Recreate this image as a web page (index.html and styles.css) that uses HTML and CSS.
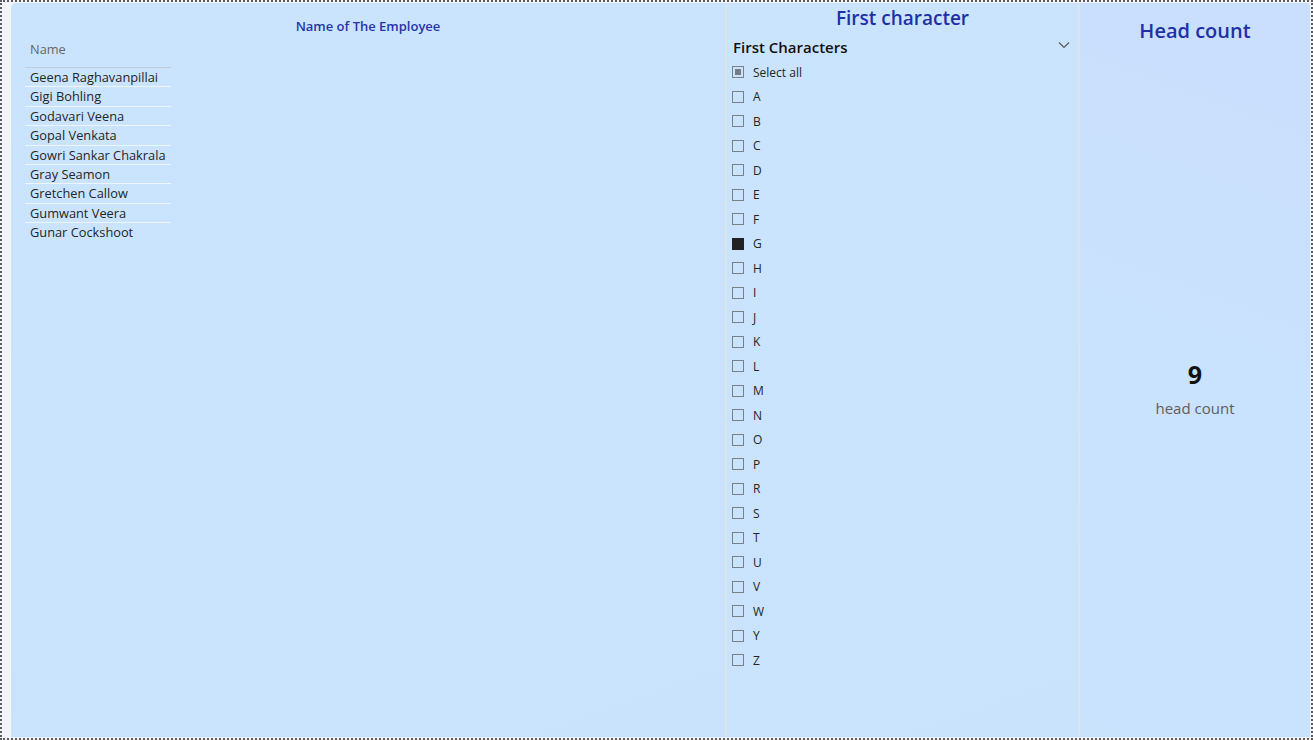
FILE: index.html
```html
<!DOCTYPE html>
<html>
<head>
<meta charset="utf-8">
<link rel="stylesheet" href="styles.css">
</head>
<body>
<div class="canvas">
  <section class="panel panel-names">
    <h2 class="names-title">Name of The Employee</h2>
    <div class="table">
      <div class="th">Name</div>
      <div class="td">Geena Raghavanpillai</div>
      <div class="td">Gigi Bohling</div>
      <div class="td">Godavari Veena</div>
      <div class="td">Gopal Venkata</div>
      <div class="td">Gowri Sankar Chakrala</div>
      <div class="td">Gray Seamon</div>
      <div class="td">Gretchen Callow</div>
      <div class="td">Gumwant Veera</div>
      <div class="td last">Gunar Cockshoot</div>
    </div>
  </section>
  <div class="divider"></div>
  <section class="panel panel-slicer">
    <h2 class="slicer-title">First character</h2>
    <div class="slicer-head">
      <span>First Characters</span>
      <svg class="chev" width="12" height="8" viewBox="0 0 12 8"><path d="M1 1.5 L6 6.5 L11 1.5" fill="none" stroke="#555" stroke-width="1.1"/></svg>
    </div>
    <ul class="items">
      <li><span class="box partial"></span>Select all</li>
      <li><span class="box"></span>A</li>
      <li><span class="box"></span>B</li>
      <li><span class="box"></span>C</li>
      <li><span class="box"></span>D</li>
      <li><span class="box"></span>E</li>
      <li><span class="box"></span>F</li>
      <li><span class="box on"></span>G</li>
      <li><span class="box"></span>H</li>
      <li><span class="box"></span>I</li>
      <li><span class="box"></span>J</li>
      <li><span class="box"></span>K</li>
      <li><span class="box"></span>L</li>
      <li><span class="box"></span>M</li>
      <li><span class="box"></span>N</li>
      <li><span class="box"></span>O</li>
      <li><span class="box"></span>P</li>
      <li><span class="box"></span>R</li>
      <li><span class="box"></span>S</li>
      <li><span class="box"></span>T</li>
      <li><span class="box"></span>U</li>
      <li><span class="box"></span>V</li>
      <li><span class="box"></span>W</li>
      <li><span class="box"></span>Y</li>
      <li><span class="box"></span>Z</li>
    </ul>
  </section>
  <div class="divider"></div>
  <section class="panel panel-card">
    <h2 class="card-title">Head count</h2>
    <div class="card-body">
      <div class="card-value">9</div>
      <div class="card-label">head count</div>
    </div>
  </section>
</div>
</body>
</html>
```
FILE: styles.css
```css
* { box-sizing: border-box; }
html, body { margin: 0; padding: 0; }
body {
  width: 1313px;
  height: 740px;
  font-family: "Segoe UI", "Open Sans", "Noto Sans", sans-serif;
  background: #ffffff;
  overflow: hidden;
}
.canvas {
  width: 1313px;
  height: 740px;
  border: 2px dotted #5c5c5c;
  background: #f3f4f9;
  display: flex;
  padding: 1px 1px 1px 9px;
}
.panel {
  height: 100%;
  background: linear-gradient(160deg, #cbe4fe 0%, #c9e3fd 100%);
}
.divider {
  width: 2px;
  height: 100%;
  background: #dbe3ec;
}
.panel-names {
  width: 714px;
  border-top-left-radius: 5px;
  padding: 14px 0 0 14px;
}
.names-title {
  margin: 0;
  font-size: 13px;
  line-height: 18px;
  font-weight: 600;
  color: #2535a8;
  text-align: center;
  padding-right: 14px;
}
.table {
  width: 146px;
  margin-top: 5px;
  font-size: 12.8px;
  color: #252423;
}
.th {
  color: #666666;
  line-height: 18px;
  padding: 0 0 9px 5px;
  border-bottom: 1.5px solid #c2cad3;
}
.td {
  line-height: 18.4px;
  padding-left: 5px;
  border-bottom: 1px solid #eef5fd;
}
.td:first-of-type { padding-top: 1.5px; }
.td.last { border-bottom: none; }
.panel-slicer {
  width: 351px;
  padding: 3px 0 0 6px;
  display: flex;
  flex-direction: column;
}
.slicer-title {
  margin: 0;
  font-size: 19px;
  line-height: 24px;
  font-weight: 600;
  color: #1e30a6;
  text-align: center;
  padding-right: 6px;
}
.slicer-head {
  margin-top: 7px;
  display: flex;
  justify-content: space-between;
  align-items: flex-start;
  padding-right: 8px;
  font-size: 15px;
  line-height: 20px;
  font-weight: 600;
  color: #111111;
}
.chev { margin-top: 4px; }
.items {
  list-style: none;
  margin: 2.75px 0 0 -1px;
  padding: 0;
}
.items li {
  height: 24.5px;
  display: flex;
  align-items: center;
  font-size: 12px;
  color: #252423;
}
.box {
  width: 12px;
  height: 12px;
  border: 1px solid #7b7f86;
  margin-right: 9px;
  display: flex;
  align-items: center;
  justify-content: center;
}
.box.partial::after {
  content: "";
  width: 6px;
  height: 6px;
  background: #777a80;
}
.box.on {
  background: #222222;
  border-color: #222222;
}
.panel-card {
  flex: 1;
  border-top-right-radius: 4px;
  background: linear-gradient(200deg, #cadefd 0%, #c9e2fd 50%, #cae3fd 100%);
  padding-top: 14px;
  display: flex;
  flex-direction: column;
}
.card-title {
  margin: 0;
  font-size: 20px;
  line-height: 28px;
  font-weight: 600;
  color: #1e30a6;
  text-align: center;
}
.card-body {
  flex: 1;
  display: flex;
  flex-direction: column;
  align-items: center;
  justify-content: center;
  padding-bottom: 6px;
}
.card-value {
  font-size: 25px;
  line-height: 32px;
  font-weight: 700;
  color: #111111;
}
.card-label {
  margin-top: 7px;
  font-size: 15px;
  line-height: 22px;
  color: #605e5c;
}
```
